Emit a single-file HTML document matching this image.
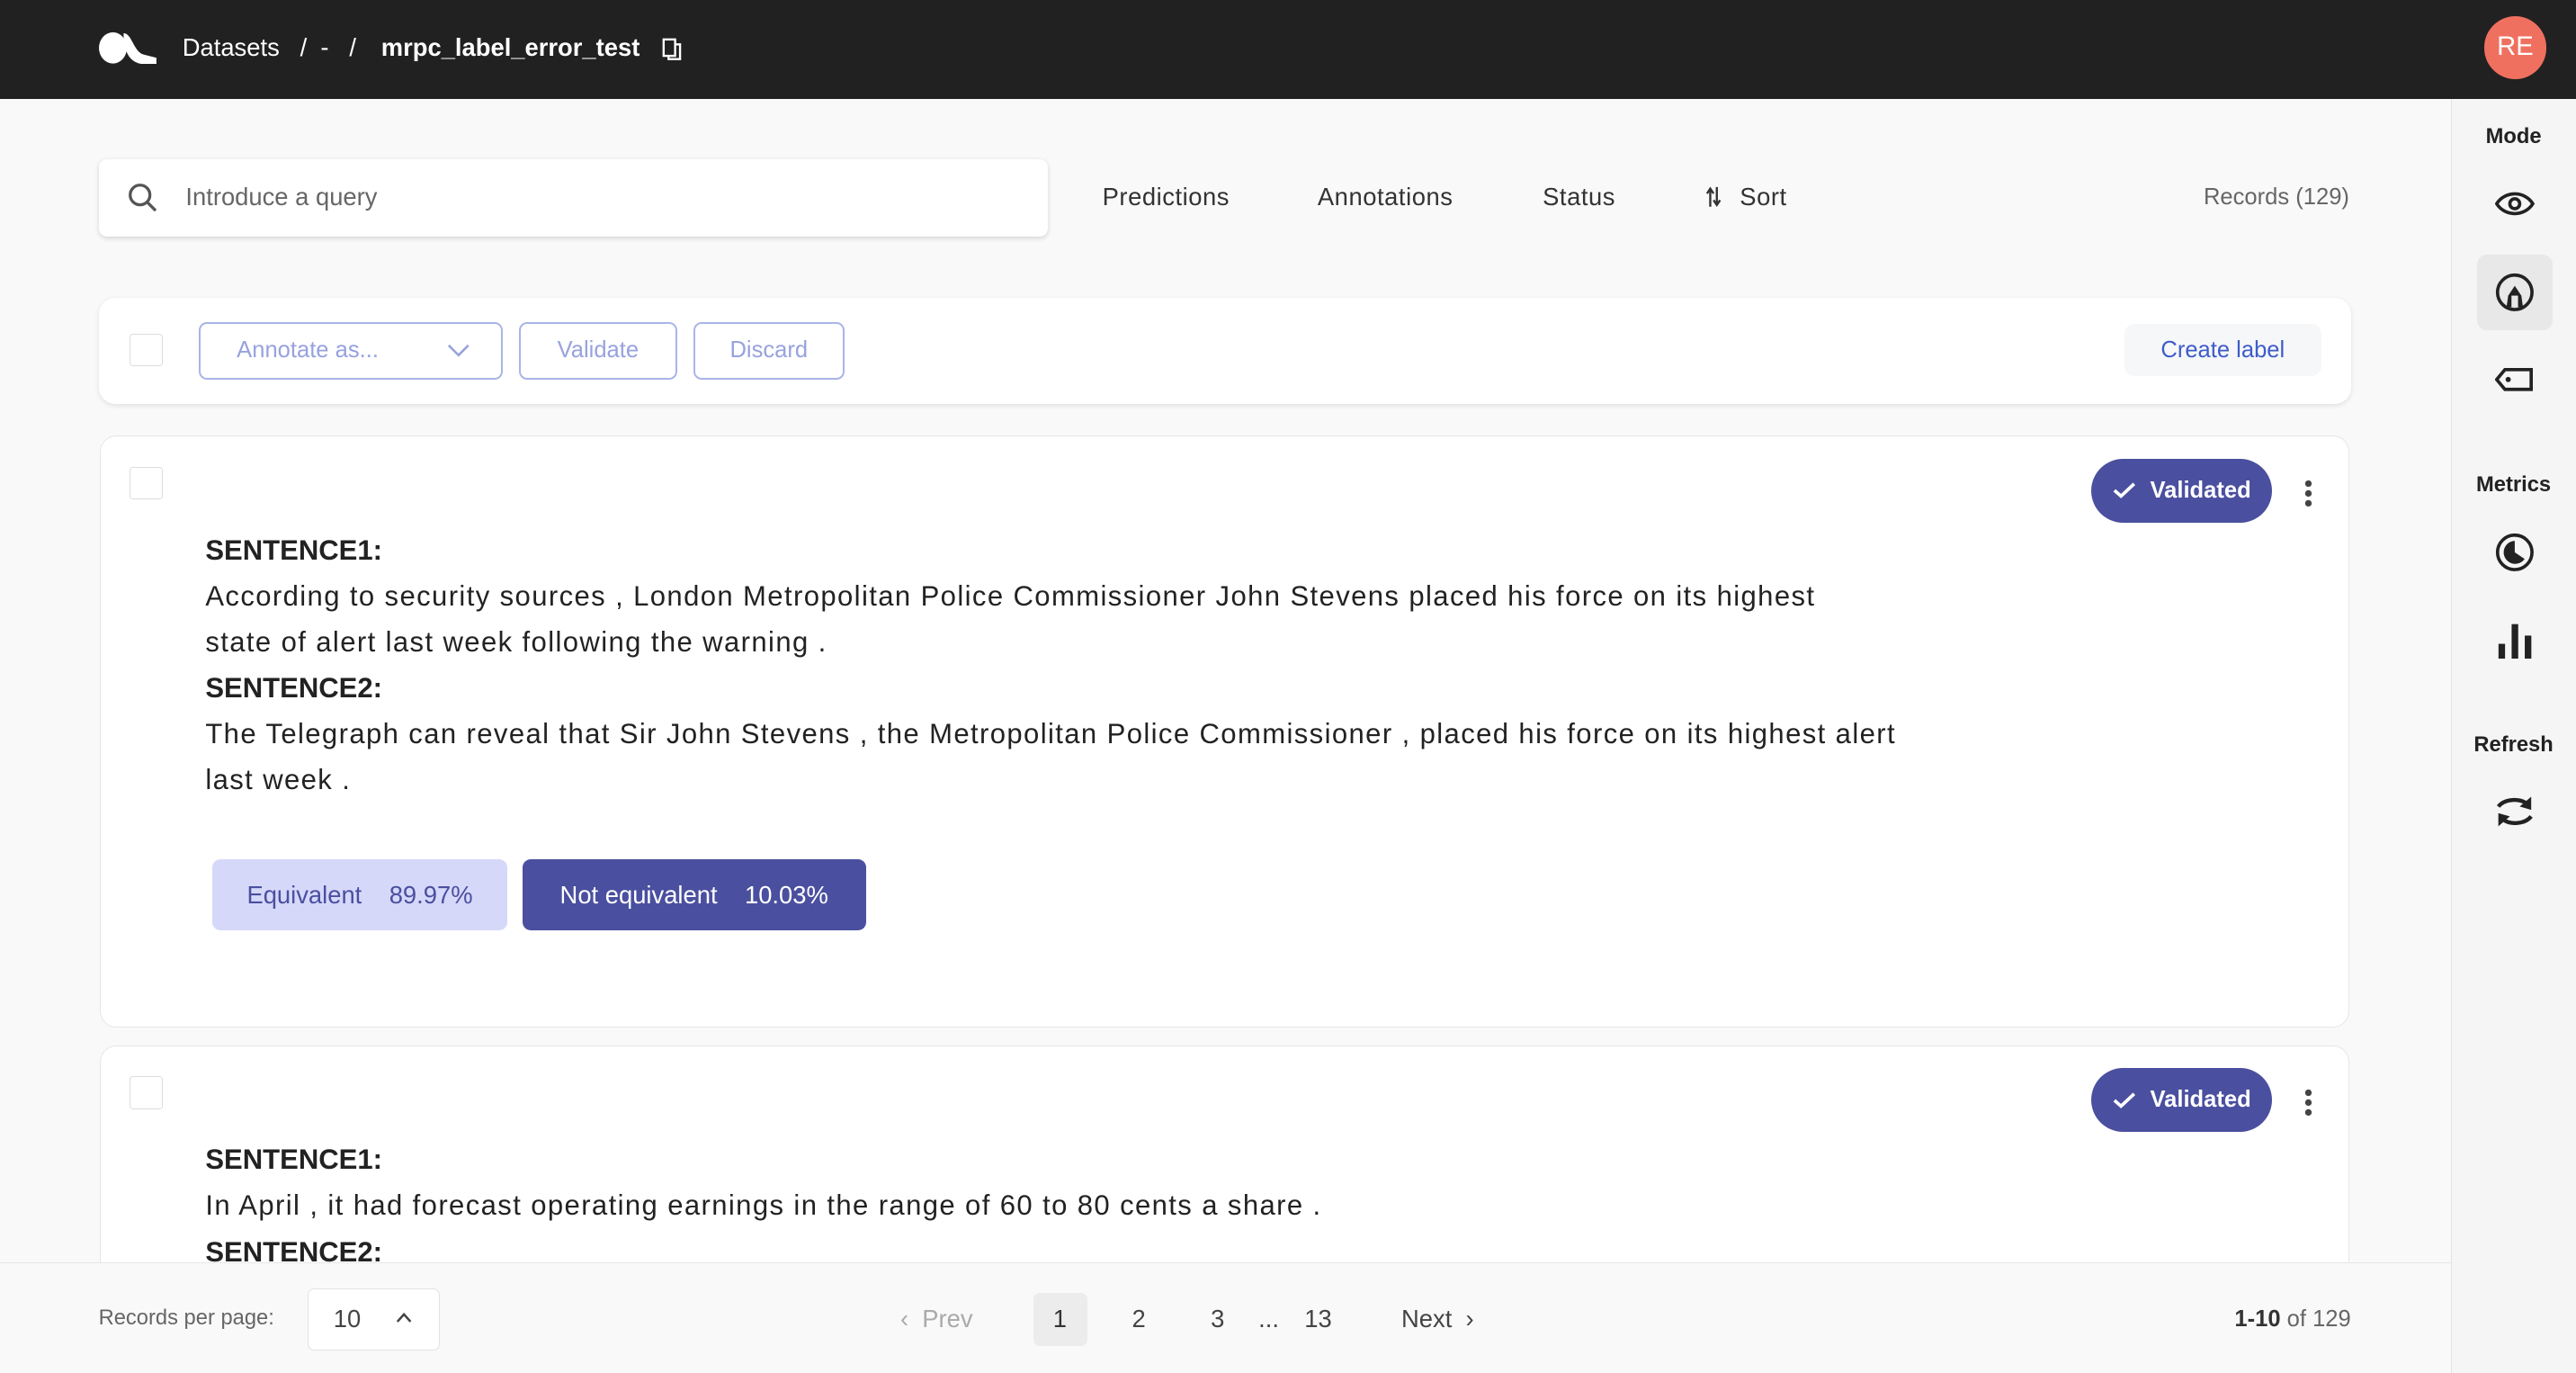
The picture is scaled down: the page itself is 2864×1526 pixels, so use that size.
<!DOCTYPE html>
<html><head><meta charset="utf-8">
<style>
html,body{margin:0;padding:0;width:2864px;height:1526px;overflow:hidden;background:#f9f9f9;}
#w{position:relative;width:1568px;height:836px;zoom:1.82653;font-family:"Liberation Sans",sans-serif;color:#222;}
.a{position:absolute;white-space:nowrap;}
.hdr{left:0;top:0;width:1568px;height:60px;background:#212121;}
.side{left:1492px;top:60px;width:76px;height:776px;background:#f5f5f5;border-left:1px solid #e4e4e4;}
.slab{width:76px;text-align:center;font-size:13px;font-weight:bold;color:#222;left:1492px;}
.card{background:#fff;border-radius:10px;}
.cb{width:20px;height:20px;border:1px solid #ddd;background:#fff;border-radius:2px;box-sizing:border-box;}
.btn{border:1.5px solid #a9b5e6;border-radius:5px;color:#97a2de;font-size:14px;box-sizing:border-box;display:flex;align-items:center;justify-content:center;}
.pill{background:#4a4f9f;color:#fff;border-radius:20px;font-size:14px;display:flex;align-items:center;justify-content:center;font-weight:bold;}
.t{font-size:17px;color:#222;letter-spacing:.76px;}
.b{font-size:17px;font-weight:bold;color:#222;}
.f{font-size:15px;color:#333;letter-spacing:.3px;}
</style></head><body>
<div id="w">
<div class="a hdr"></div>
<svg class="a" style="left:60px;top:19px" width="36" height="20" viewBox="0 0 36 20"><ellipse cx="8.5" cy="10" rx="8.5" ry="9.5" fill="#fff"/><path d="M15 1 C20 1 21 12 27 14 L35 16 L35 20 L29 20 C19 20 15 13 15 1 Z" fill="#fff"/></svg>
<div class="a" style="left:111px;top:20px;font-size:15px;color:#fff;">Datasets &nbsp;&nbsp;/ &nbsp;- &nbsp;&nbsp;/</div>
<div class="a" style="left:232px;top:20px;font-size:15px;color:#fff;font-weight:bold;">mrpc_label_error_test</div>
<svg class="a" style="left:403px;top:23px" width="12" height="14" viewBox="0 0 12 14"><rect x="1" y="1" width="7" height="10" fill="none" stroke="#fff" stroke-width="1.3"/><path d="M4 11 V13 H11 V4 H8" fill="none" stroke="#fff" stroke-width="1.3"/></svg>
<div class="a" style="left:1512px;top:10px;width:38px;height:38px;border-radius:50%;background:#f0705f;color:#fff;font-size:16px;display:flex;align-items:center;justify-content:center;">RE</div>

<div class="a side"></div>
<div class="a slab" style="top:76px">Mode</div>
<svg class="a" style="left:1519px;top:115px" width="24" height="18" viewBox="0 0 24 18"><path d="M1 9 C6 1 18 1 23 9 C18 17 6 17 1 9 Z" fill="none" stroke="#222" stroke-width="2"/><circle cx="12" cy="9" r="3" fill="none" stroke="#222" stroke-width="2"/></svg>
<div class="a" style="left:1508px;top:155px;width:46px;height:46px;background:#e8e8e8;border-radius:6px;"></div>
<svg class="a" style="left:1519px;top:166px" width="24" height="24" viewBox="0 0 24 24"><circle cx="12" cy="12" r="10.5" fill="none" stroke="#222" stroke-width="2"/><path d="M7 21 L8 14 L12 8 L16 14 L17 21 Z" fill="#222"/><path d="M10 14 H14 V21 H10 Z" fill="#e8e8e8"/></svg>
<svg class="a" style="left:1519px;top:224px" width="24" height="14" viewBox="0 0 24 14"><path d="M6 1 H22 V13 H6 L1 7 Z" fill="none" stroke="#222" stroke-width="2"/><circle cx="8" cy="7" r="1.6" fill="#222"/></svg>
<div class="a slab" style="top:288px">Metrics</div>
<svg class="a" style="left:1519px;top:324px" width="24" height="24" viewBox="0 0 24 24"><circle cx="12" cy="12" r="10.5" fill="none" stroke="#222" stroke-width="2"/><path d="M12 5 A7 7 0 1 0 18 16 L12 12 Z" fill="#222"/></svg>
<svg class="a" style="left:1520px;top:378px" width="22" height="24" viewBox="0 0 22 24"><rect x="1" y="14" width="4" height="9" fill="#222"/><rect x="9" y="2" width="4" height="21" fill="#222"/><rect x="17" y="9" width="4" height="14" fill="#222"/></svg>
<div class="a slab" style="top:446px">Refresh</div>
<svg class="a" style="left:1519px;top:482px" width="24" height="24" viewBox="0 0 24 24"><path d="M2 9 C6 4 15 4 19 7" fill="none" stroke="#222" stroke-width="2.4"/><path d="M22 3 L22 11 L15 9 Z" fill="#222"/><path d="M22 15 C18 20 9 20 5 17" fill="none" stroke="#222" stroke-width="2.4"/><path d="M2 21 L2 13 L9 15 Z" fill="#222"/></svg>

<div class="a card" style="left:60px;top:97px;width:578px;height:47px;border-radius:5px;box-shadow:0 1px 3px rgba(0,0,0,.15);"></div>
<svg class="a" style="left:78px;top:111px" width="18" height="18" viewBox="0 0 18 18"><circle cx="7.5" cy="7.5" r="6" fill="none" stroke="#555" stroke-width="1.8"/><path d="M12 12 L17 17" stroke="#555" stroke-width="1.8"/></svg>
<div class="a" style="left:113px;top:111px;font-size:15px;color:#666;">Introduce a query</div>
<div class="a f" style="left:671px;top:111px">Predictions</div>
<div class="a f" style="left:802px;top:111px">Annotations</div>
<div class="a f" style="left:939px;top:111px">Status</div>
<svg class="a" style="left:1038px;top:113px" width="10" height="14" viewBox="0 0 10 14"><path d="M3 13 V3 M1 5 L3 2 L5 5" fill="none" stroke="#333" stroke-width="1.3"/><path d="M7 1 V11 M5 9 L7 12 L9 9" fill="none" stroke="#333" stroke-width="1.3"/></svg>
<div class="a f" style="left:1059px;top:111px">Sort</div>
<div class="a" style="right:138px;top:112px;font-size:14px;color:#666;">Records (129)</div>

<div class="a card" style="left:60px;top:181px;width:1371px;height:65px;box-shadow:0 1px 3px rgba(0,0,0,.1);"></div>
<div class="a cb" style="left:79px;top:203px"></div>
<div class="a btn" style="left:121px;top:196px;width:185px;height:35px;justify-content:flex-start;padding-left:22px;">Annotate as...</div>
<svg class="a" style="left:272px;top:209px" width="14" height="9" viewBox="0 0 14 9"><path d="M1 1 L7 7 L13 1" fill="none" stroke="#97a2de" stroke-width="1.4"/></svg>
<div class="a btn" style="left:316px;top:196px;width:96px;height:35px;">Validate</div>
<div class="a btn" style="left:422px;top:196px;width:92px;height:35px;">Discard</div>
<div class="a" style="left:1293px;top:197px;width:120px;height:32px;background:#f6f7f9;border-radius:6px;color:#3e5cc9;font-size:14px;display:flex;align-items:center;justify-content:center;">Create label</div>

<div class="a card" style="left:61px;top:265px;width:1368px;height:359px;border:1px solid #e6e6e6;"></div>
<div class="a cb" style="left:79px;top:284px"></div>
<div class="a pill" style="left:1273px;top:279px;width:110px;height:39px;"><svg width="14" height="11" viewBox="0 0 14 11" style="margin-right:9px"><path d="M1 5.5 L5 9 L13 1.5" fill="none" stroke="#fff" stroke-width="2"/></svg>Validated</div>
<svg class="a" style="left:1402px;top:291px" width="6" height="18" viewBox="0 0 6 18"><circle cx="3" cy="3" r="2" fill="#444"/><circle cx="3" cy="9" r="2" fill="#444"/><circle cx="3" cy="15" r="2" fill="#444"/></svg>
<div class="a b" style="left:125px;top:325px">SENTENCE1:</div>
<div class="a t" style="left:125px;top:353px;">According to security sources , London Metropolitan Police Commissioner John Stevens placed his force on its highest</div>
<div class="a t" style="left:125px;top:381px;">state of alert last week following the warning .</div>
<div class="a b" style="left:125px;top:409px">SENTENCE2:</div>
<div class="a t" style="left:125px;top:437px;">The Telegraph can reveal that Sir John Stevens , the Metropolitan Police Commissioner , placed his force on its highest alert</div>
<div class="a t" style="left:125px;top:465px;">last week .</div>
<div class="a" style="left:129px;top:523px;width:180px;height:43px;background:#d6d8fa;color:#4a4f9f;border-radius:5px;font-size:15px;display:flex;align-items:center;justify-content:center;">Equivalent &nbsp;&nbsp;&nbsp;89.97%</div>
<div class="a" style="left:318px;top:523px;width:209px;height:43px;background:#4a4f9f;color:#fff;border-radius:5px;font-size:15px;display:flex;align-items:center;justify-content:center;">Not equivalent &nbsp;&nbsp;&nbsp;10.03%</div>

<div class="a card" style="left:61px;top:636px;width:1368px;height:200px;border:1px solid #e6e6e6;"></div>
<div class="a cb" style="left:79px;top:655px"></div>
<div class="a pill" style="left:1273px;top:650px;width:110px;height:39px;"><svg width="14" height="11" viewBox="0 0 14 11" style="margin-right:9px"><path d="M1 5.5 L5 9 L13 1.5" fill="none" stroke="#fff" stroke-width="2"/></svg>Validated</div>
<svg class="a" style="left:1402px;top:662px" width="6" height="18" viewBox="0 0 6 18"><circle cx="3" cy="3" r="2" fill="#444"/><circle cx="3" cy="9" r="2" fill="#444"/><circle cx="3" cy="15" r="2" fill="#444"/></svg>
<div class="a b" style="left:125px;top:696px">SENTENCE1:</div>
<div class="a t" style="left:125px;top:724px;">In April , it had forecast operating earnings in the range of 60 to 80 cents a share .</div>
<div class="a b" style="left:125px;top:752px">SENTENCE2:</div>

<div class="a" style="left:0;top:768px;width:1492px;height:68px;background:#f9f9f9;border-top:1px solid #e6e6e6;"></div>
<div class="a" style="left:60px;top:795px;font-size:13px;color:#666;">Records per page:</div>
<div class="a" style="left:187px;top:784px;width:81px;height:38px;background:#fff;border:1px solid #e2e2e2;border-radius:4px;box-sizing:border-box;"></div>
<div class="a" style="left:203px;top:794px;font-size:15px;color:#444;">10</div>
<svg class="a" style="left:241px;top:798px" width="10" height="7" viewBox="0 0 10 7"><path d="M1 6 L5 1.5 L9 6" fill="none" stroke="#444" stroke-width="1.4"/></svg>
<div class="a" style="left:548px;top:794px;font-size:15px;color:#aaa;">‹ &nbsp;Prev</div>
<div class="a" style="left:629px;top:787px;width:33px;height:32px;background:#ececec;border-radius:4px;"></div>
<div class="a" style="left:641px;top:794px;font-size:15px;color:#333;">1</div>
<div class="a" style="left:689px;top:794px;font-size:15px;color:#444;">2</div>
<div class="a" style="left:737px;top:794px;font-size:15px;color:#444;">3</div>
<div class="a" style="left:766px;top:794px;font-size:15px;color:#444;">...</div>
<div class="a" style="left:794px;top:794px;font-size:15px;color:#444;">13</div>
<div class="a" style="left:853px;top:794px;font-size:15px;color:#444;">Next &nbsp;›</div>
<div class="a" style="right:137px;top:795px;font-size:14px;color:#666;"><b style="color:#333">1-10</b> of 129</div>
</div>
</body></html>
